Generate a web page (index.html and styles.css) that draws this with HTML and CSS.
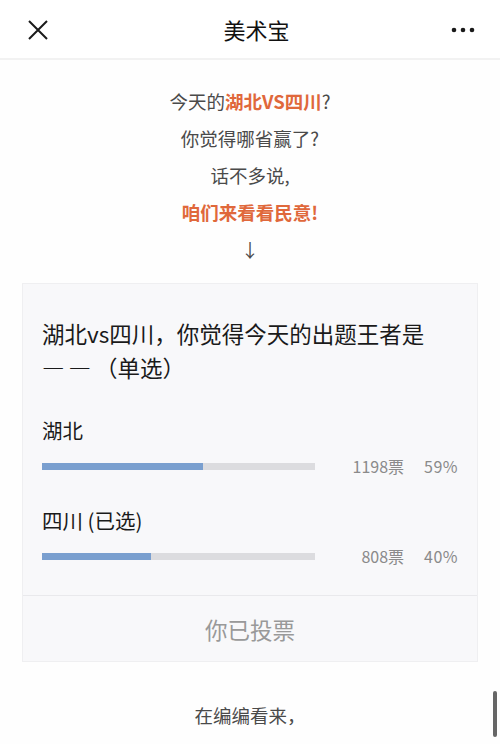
FILE: index.html
```html
<!DOCTYPE html>
<html lang="zh-CN">

<head>
    <meta charset="UTF-8">
    <meta name="viewport" content="width=device-width, initial-scale=1.0">
    <title>美术宝</title>
    <link rel="stylesheet" href="styles.css">
</head>

<body>
    <header class="topbar">
        <svg class="close-icon" width="20" height="20" viewBox="0 0 20 20">
            <path d="M1 1 L19 19 M19 1 L1 19" stroke="#1a1a1a" stroke-width="2" fill="none" />
        </svg>
        <span class="topbar-title">美术宝</span>
        <svg class="more-icon" width="24" height="6" viewBox="0 0 24 6">
            <circle cx="3" cy="3" r="2.3" fill="#1a1a1a" />
            <circle cx="12" cy="3" r="2.3" fill="#1a1a1a" />
            <circle cx="21" cy="3" r="2.3" fill="#1a1a1a" />
        </svg>
    </header>

    <main class="article">
        <div class="intro">
            <p>今天的<strong class="accent">湖北VS四川</strong>?</p>
            <p>你觉得哪省赢了?</p>
            <p>话不多说,</p>
            <p><strong class="accent">咱们来看看民意!</strong></p>
            <p>↓</p>
        </div>

        <section class="poll">
            <div class="poll-body">
                <h2 class="poll-title">湖北vs四川，你觉得今天的出题王者是<br><span class="dash">—</span><span class="dash">—</span>（单选）</h2>

                <div class="option">
                    <div class="option-label">湖北</div>
                    <div class="option-row">
                        <div class="bar"><div class="bar-fill" style="width: 59%"></div></div>
                        <span class="votes">1198票</span>
                        <span class="percent">59%</span>
                    </div>
                </div>

                <div class="option">
                    <div class="option-label">四川 (已选)</div>
                    <div class="option-row">
                        <div class="bar"><div class="bar-fill" style="width: 40%"></div></div>
                        <span class="votes">808票</span>
                        <span class="percent">40%</span>
                    </div>
                </div>
            </div>
            <div class="poll-done">你已投票</div>
        </section>

        <div class="outro">
            <p>在编编看来，</p>
            <p><strong class="accent">湖北全面可获胜</strong></p>
        </div>
    </main>

    <div class="scrollbar"></div>
</body>

</html>
```

FILE: styles.css
```css
html,
body {
    height: 100%;
}

body {
    margin: 0;
    overflow: hidden;
    background-color: #fefefe;
    font-family: "Noto Sans CJK SC", "Noto Sans", sans-serif;
    color: #222;
}

p {
    margin: 0;
}

.topbar {
    height: 58px;
    background-color: #fff;
    border-bottom: 2px solid #f2f2f2;
    display: flex;
    align-items: center;
    justify-content: space-between;
    padding: 0 25px 0 28px;
}

.close-icon {
    margin-top: 1px;
}

.topbar-title {
    font-size: 22px;
    color: #111;
    margin-left: 14px;
}

.more-icon {
    margin-top: 2px;
}

.article {
    padding: 23px 22px 0;
}

.intro,
.outro {
    text-align: center;
    font-size: 18.5px;
    line-height: 37px;
    color: #4a4a4a;
}

.accent {
    color: #e0683b;
    font-weight: bold;
}

.poll {
    margin-top: 15px;
    background-color: #f8f8fa;
    border: 1px solid #efeff1;
}

.poll-body {
    padding: 32px 19px 29px;
    border-bottom: 1px solid #e9e9ec;
}

.poll-title {
    margin: 0;
    font-size: 22.5px;
    font-weight: normal;
    line-height: 34px;
    color: #1a1a1a;
}

.dash {
    margin-right: 4px;
}

.option {
    margin-top: 31px;
}

.option+.option {
    margin-top: 29px;
}

.option-label {
    font-size: 20.5px;
    line-height: 30px;
    color: #1a1a1a;
}

.option-row {
    display: flex;
    align-items: center;
    margin-top: 11px;
    height: 20px;
    font-size: 16px;
    color: #8a8a8a;
}

.bar {
    width: 274px;
    height: 7px;
    background-color: #dcdcdf;
}

.bar-fill {
    height: 100%;
    background-color: #7a9fcf;
}

.votes {
    width: 89px;
    text-align: right;
}

.percent {
    width: 54px;
    text-align: right;
    letter-spacing: 0.5px;
}

.poll-done {
    height: 65px;
    display: flex;
    align-items: center;
    justify-content: center;
    font-size: 22.5px;
    color: #999;
}

.outro {
    margin-top: 35px;
}

.scrollbar {
    position: fixed;
    right: 3px;
    top: 691px;
    width: 4px;
    height: 46px;
    border-radius: 2px;
    background-color: #666;
}
```
